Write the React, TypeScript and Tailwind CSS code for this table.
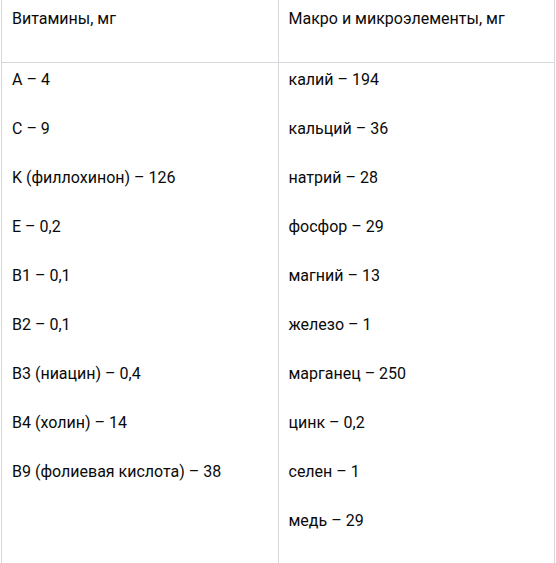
const vitamins = [
  'A – 4',
  'C – 9',
  'K (филлохинон) – 126',
  'E – 0,2',
  'B1 – 0,1',
  'B2 – 0,1',
  'B3 (ниацин) – 0,4',
  'B4 (холин) – 14',
  'B9 (фолиевая кислота) – 38',
]

const minerals = [
  'калий – 194',
  'кальций – 36',
  'натрий – 28',
  'фосфор – 29',
  'магний – 13',
  'железо – 1',
  'марганец – 250',
  'цинк – 0,2',
  'селен – 1',
  'медь – 29',
]

function Cell({ items, first }: { items: string[]; first?: boolean }) {
  return (
    <td
      className={`w-1/2 border border-[#d5d9de] px-[10px] align-top ${
        first ? 'pt-[6px] pb-[7px]' : 'pt-[4px] pb-[30px]'
      }`}
    >
      {items.map((t) => (
        <p key={t} className="mb-[24px] leading-[25px]">
          {t}
        </p>
      ))}
    </td>
  )
}

export default function App() {
  return (
    <div
      className="h-[563px] overflow-hidden bg-white text-[16px] text-[#0a0a0a]"
      style={{ fontFamily: 'Roboto, "Liberation Sans", sans-serif' }}
    >
      <table className="ml-[1px] -mt-[1px] w-[554px] table-fixed border-collapse">
        <tbody>
          <tr>
            <Cell items={['Витамины, мг']} first />
            <Cell items={['Макро и микроэлементы, мг']} first />
          </tr>
          <tr>
            <Cell items={vitamins} />
            <Cell items={minerals} />
          </tr>
        </tbody>
      </table>
    </div>
  )
}
